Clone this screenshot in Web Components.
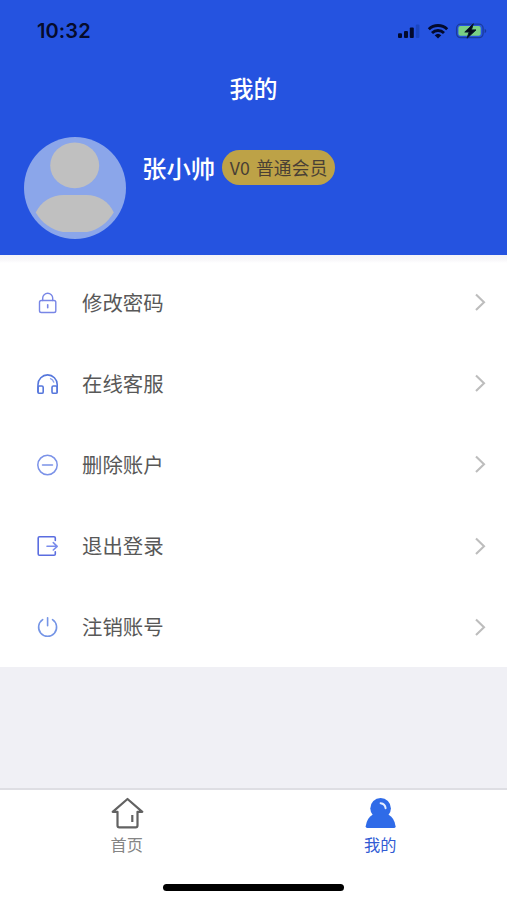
<!DOCTYPE html>
<html lang="zh-CN">
<head>
<meta charset="utf-8">
<title>我的</title>
<style>
html,body{margin:0;height:100%}
body{background:#f0f0f5;font-family:"Liberation Sans","Noto Sans CJK SC",sans-serif;overflow:hidden}
</style>
</head>
<body>
<profile-page></profile-page>
<script>
const define = (name, html) => customElements.define(name, class extends HTMLElement {
  constructor() {
    super();
    const t = document.createElement('template');
    t.innerHTML = html;
    this.attachShadow({mode: 'open'}).append(t.content.cloneNode(true));
  }
});

define('status-bar', `
<style>
:host{display:flex;height:61px;align-items:center;justify-content:space-between;padding:0 18px 0 37px;box-sizing:border-box;color:#050b2b}
.time{font:600 20px/24px Inter,sans-serif;letter-spacing:.1px}
svg{display:block}
</style>
<span class="time">10:32</span>
<svg width="92" height="20" viewBox="0 0 92 20">
  <g fill="#030a2c"><rect x="1" y="12.3" width="4" height="4.7" rx="1"/><rect x="7" y="10" width="4" height="7" rx="1"/><rect x="12.8" y="6.6" width="4" height="10.4" rx="1"/></g>
  <rect x="18.8" y="3.5" width="3.6" height="13.5" rx="1" fill="#1b46c0"/>
  <g fill="none" stroke="#030a2c" stroke-width="2.9"><path d="M31.8 8.2a13.2 13.2 0 0 1 18.4 0"/><path d="M35 12a8.6 8.6 0 0 1 12 0"/></g>
  <path d="M37.7 14.2a4.8 4.8 0 0 1 6.6 0L41 17.5z" fill="#030a2c"/>
  <rect x="59.6" y="3.2" width="26.500" height="13.400" rx="4" fill="none" stroke="#1a3c9c" stroke-width="1.300"/>
  <path d="M87.600 7.700v4.600q1.700-.7 1.700-2.300t-1.700-2.300z" fill="#1a3c9c"/>
  <rect x="61.400" y="5" width="22.300" height="9.800" rx="2" fill="#79cf83"/>
  <path d="M76.300 2.800L67.800 11h4.400l-2.200 6.200 9-8.300h-4.600z" fill="#030a16" stroke="#071a2c" stroke-width="1"/>
</svg>`);

define('user-avatar', `
<style>:host{display:block;width:102px;height:102px}svg{display:block}</style>
<svg width="102" height="102" viewBox="0 0 102 102">
  <circle cx="51" cy="51" r="51" fill="#8ba6ea"/>
  <ellipse cx="50.700" cy="28.400" rx="24.500" ry="22.800" fill="#c0c0c0"/>
  <path d="M11.700 75.500C17 65 27 58 40 58h22c13 0 23 7 27.800 17.500C83 86 75 92.500 63 95H39C27 92.500 18 86 11.700 75.500z" fill="#c0c0c0"/>
</svg>`);

define('level-badge', `
<style>:host{display:flex;align-items:center;justify-content:center;width:113px;height:35px;margin-bottom:2px;border-radius:18px;background:#bda247;color:#493f35;font:17.700px/35px "Noto Sans CJK SC",sans-serif;letter-spacing:.25px;word-spacing:1.500px;white-space:nowrap}</style>
<slot></slot>`);

define('profile-header', `
<style>
:host{display:block;height:254.500px;background:#2553e0;color:#fff;font-family:"Noto Sans CJK SC",sans-serif}
h1{margin:0;height:54px;font-size:24px;line-height:54px;font-weight:500;text-align:center}
.user{display:flex;padding:22px 0 0 24px}
.who{display:flex;align-items:center;height:36px;margin:13px 0 0 16px;gap:7px}
.name{font-size:24.400px;line-height:36px;font-weight:500}
</style>
<status-bar></status-bar>
<h1><slot name="title"></slot></h1>
<div class="user"><user-avatar></user-avatar><div class="who"><span class="name"><slot name="name"></slot></span><level-badge><slot name="level"></slot></level-badge></div></div>`);

define('menu-row', `
<style>
:host{display:flex;align-items:center;height:81.200px;padding:0 20px 0 36px;box-sizing:border-box;color:#585858;font:20.400px/30px "Noto Sans CJK SC",sans-serif}
.icon{display:flex;width:24px;height:24px;margin-right:22px}
.label{flex:1;margin-bottom:2px}
.chev{display:block;margin-bottom:1px}
</style>
<span class="icon"><slot name="icon"></slot></span>
<span class="label"><slot></slot></span>
<svg class="chev" width="14" height="20" viewBox="0 0 14 20"><path d="M3 2.500L11 10.200 3 17.900" fill="none" stroke="#bdbdbd" stroke-width="2.100"/></svg>`);

define('tab-item', `
<style>
:host{display:flex;flex:1;flex-direction:column;align-items:center;padding-top:6px;color:#858585;font:16.200px/24px "Noto Sans CJK SC",sans-serif}
:host([active]){color:#315bd4}
.icon{display:flex;height:36px}
</style>
<span class="icon"><slot name="icon"></slot></span><slot></slot>`);

define('tab-bar', `
<style>
:host{display:flex;flex-direction:column;height:112px;box-sizing:border-box;border-top:2px solid #dedee3;background:#fff}
.tabs{display:flex;height:94px}
.home{width:181px;height:7px;border-radius:4px;background:#000;margin:0 auto}
</style>
<div class="tabs"><slot></slot></div><div class="home"></div>`);

define('profile-page', `
<style>
:host{display:flex;flex-direction:column;height:900px;background:#f0f0f5}
.menu{background:linear-gradient(#f4f3f7,#f8f7fa 5px,#fff 8px);padding-top:7.500px;height:405px}
tab-bar{margin-top:auto}
svg{display:block;fill:none;stroke-linecap:round;stroke-linejoin:round}
</style>
<profile-header><span slot="title">我的</span><span slot="name">张小帅</span><span slot="level">V0 普通会员</span></profile-header>
<div class="menu">
  <menu-row><svg slot="icon" width="24" height="24" viewBox="0 0 24 24" stroke="#7886e6" stroke-width="1.400"><rect x="3.500" y="9.500" width="16.300" height="12" rx="1.800"/><path d="M6.700 9.500V7a5 4.700 0 0 1 10 0v2.500"/><path d="M11.700 13.800v3" stroke-width="1.600"/></svg>修改密码</menu-row>
  <menu-row><svg slot="icon" width="24" height="24" viewBox="0 0 24 24" stroke="#5677dc" stroke-width="1.600"><path d="M2 20v-7.500a9.600 9.600 0 0 1 19.200 0V20"/><rect x="2" y="14" width="5.200" height="7.300" rx="1.400"/><rect x="16" y="14" width="5.200" height="7.300" rx="1.400"/><path d="M14.500 6.700q2.500 1 3.300 3.500" stroke="#8ba2ed" stroke-width="1.300"/></svg>在线客服</menu-row>
  <menu-row><svg slot="icon" width="24" height="24" viewBox="0 0 24 24" stroke="#7b92e8" stroke-width="1.500"><circle cx="11.500" cy="12" r="9.700"/><path d="M6.500 12h10"/></svg>删除账户</menu-row>
  <menu-row><svg slot="icon" width="24" height="24" viewBox="0 0 24 24" stroke="#5a6de0" stroke-width="1.600"><path d="M19.300 6.500V4q0-1.300-1.300-1.300H3.500Q2.200 2.700 2.200 4v16q0 1.300 1.300 1.300H18q1.300 0 1.300-1.300v-2.300"/><path d="M11 12.300h10M17.300 8.600l3.900 3.700-3.900 3.700" stroke="#7a8cec"/></svg>退出登录</menu-row>
  <menu-row><svg slot="icon" width="24" height="24" viewBox="0 0 24 24" stroke="#7595e6" stroke-width="1.600"><path d="M6.700 4.700a9 9 0 1 0 9.800 0"/><path d="M11.600 2.700v8"/></svg>注销账号</menu-row>
</div>
<tab-bar>
  <tab-item><svg slot="icon" width="36" height="36" viewBox="0 0 36 36" stroke="#626262" stroke-width="2.200"><path d="M18.500 3L3.700 15.800H8.500V29.500q0 1.800 1.800 1.800h16.400q1.800 0 1.800-1.800V15.800h4.800z"/><path d="M23.300 19v7" stroke-linecap="butt"/></svg>首页</tab-item>
  <tab-item active><svg slot="icon" width="36" height="36" viewBox="0 0 36 36"><circle cx="18.600" cy="12.400" r="10.300" fill="#2f6be8"/><path d="M10.500 18.700h16.200Q32.500 22 33.600 30.200 33.700 32 32.200 32H5.200Q3.600 32 3.700 30.200 4.800 22 10.500 18.700z" fill="#2f6be8"/><path d="M18.600 7.200q4.500.5 5 5" stroke="#e5edff" stroke-width="2"/></svg>我的</tab-item>
</tab-bar>`);
</script>
</body>
</html>
